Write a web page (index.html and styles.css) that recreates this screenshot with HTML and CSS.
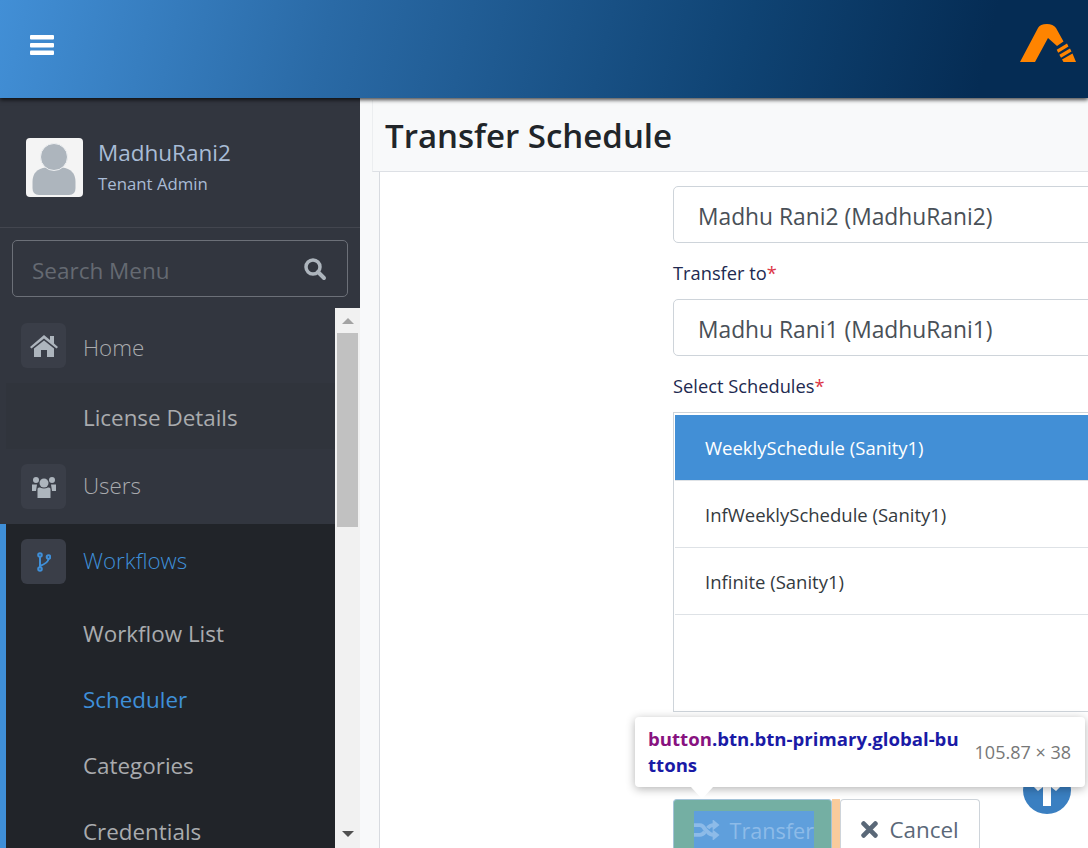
FILE: index.html
```html
<!DOCTYPE html>
<html lang="en">

<head>
    <meta charset="UTF-8">
    <title>Transfer Schedule</title>
    <link rel="stylesheet" href="styles.css">
</head>

<body>
    <header class="topbar">
        <svg class="burger" viewBox="0 0 24 20" width="24" height="20"><rect x="0" y="0" width="24" height="4.500" rx="1"/><rect x="0" y="8" width="24" height="4.500" rx="1"/><rect x="0" y="15.500" width="24" height="4.500" rx="1"/></svg>
        <svg class="logo" viewBox="0 0 56 38" width="56" height="38">
            <path fill="#ff8400" d="M0 38 L18 4 Q20 0 27 0 Q33 0 36 4 L43.500 17.500 L37 22 L28 14 L15 38 Z"/>
            <path fill="#ff8400" d="M36.700 25.700 L47 19.500 L48.500 22.500 L38.200 28.700 Z M39.300 30.700 L50 24.500 L51.500 27.500 L41 33.700 Z M42 35.500 L52.500 29.500 L56 38 L43.500 38 Z"/>
        </svg>
    </header>

    <div class="layout">
        <aside class="sidebar">
            <div class="profile">
                <svg class="avatar" viewBox="0 0 57 59" width="57" height="59">
                    <rect width="57" height="59" rx="4" fill="#f4f4f4"/>
                    <path fill="#adb5bd" d="M6.500 50 V44 Q6.500 31 20 29.500 H36 Q49.500 31 49.500 44 V50 Q49.500 57 43 57 H13 Q6.500 57 6.500 50 Z"/>
                    <circle cx="28" cy="19" r="13.500" fill="#adb5bd" stroke="#eef0f2" stroke-width="1"/>
                </svg>
                <div class="profile-text">
                    <div class="profile-name">MadhuRani2</div>
                    <div class="profile-role">Tenant Admin</div>
                </div>
            </div>
            <div class="search">
                <span class="search-label">Search Menu</span>
                <svg viewBox="0 0 24 24" width="24" height="24"><circle cx="10" cy="10" r="7" fill="none" stroke="#adb5bd" stroke-width="3.500"/><path d="M15 15 L21 21" stroke="#adb5bd" stroke-width="4" stroke-linecap="round"/></svg>
            </div>
            <div class="menu-wrap">
                <nav class="menu">
                    <a class="item">
                        <span class="item-icon">
                            <svg viewBox="0 0 28 22" width="28" height="22"><path fill="#adb5bd" d="M14 0 L20 5 V1 H24 V8.500 L28 12 L26.500 13.500 L14 3.500 L1.500 13.500 L0 12 Z M14 5.500 L24 13.500 V22 H17 V15 H11 V22 H4 V13.500 Z"/></svg>
                        </span>
                        <span class="label-low">Home</span>
                    </a>
                    <a class="sub sub-home">License Details</a>
                    <a class="item">
                        <span class="item-icon">
                            <svg viewBox="0 0 24 22" width="24" height="22"><g fill="#adb5bd"><circle cx="4" cy="4" r="3"/><circle cx="20" cy="4" r="3"/><circle cx="12" cy="7" r="4.500"/><path d="M0 8.500 H5 L4 15 H0 Z M24 8.500 H19 L20 15 H24 Z M5.500 13 Q5.500 11 8 11.500 Q12 13.500 16 11.500 Q18.500 11 18.500 13 V22 H5.500 Z"/></g></svg>
                        </span>
                        <span class="label-high">Users</span>
                    </a>
                    <div class="group">
                        <a class="item item-active">
                            <span class="item-icon">
                                <svg viewBox="0 0 14 20" width="14" height="20" fill="none" stroke="#3f8fd8" stroke-width="2"><circle cx="3" cy="3" r="1.800"/><circle cx="3" cy="17" r="1.800"/><circle cx="11.500" cy="5" r="1.800"/><path d="M3 5 V15 M3 14 Q11 11 11.500 7"/></svg>
                            </span>
                            <span class="label-high">Workflows</span>
                        </a>
                        <a class="sub">Workflow List</a>
                        <a class="sub sub-active">Scheduler</a>
                        <a class="sub">Categories</a>
                        <a class="sub">Credentials</a>
                    </div>
                </nav>
                <div class="scrollbar">
                    <span class="arrow-up"></span>
                    <span class="thumb"></span>
                    <span class="arrow-down"></span>
                </div>
            </div>
        </aside>

        <main class="main">
            <h1 class="page-title">Transfer Schedule</h1>
            <div class="card">
                <div class="form">
                    <div class="field-box">Madhu Rani2 (MadhuRani2)</div>
                    <label class="field-label">Transfer to<span class="req">*</span></label>
                    <div class="field-box">Madhu Rani1 (MadhuRani1)</div>
                    <label class="field-label">Select Schedules<span class="req">*</span></label>
                    <ul class="schedules">
                        <li class="selected">WeeklySchedule (Sanity1)</li>
                        <li>InfWeeklySchedule (Sanity1)</li>
                        <li>Infinite (Sanity1)</li>
                    </ul>
                    <div class="actions">
                        <button class="btn btn-transfer">
                            <span class="btn-content">
                                <svg viewBox="0 0 26 20" width="26" height="20"><path fill="none" stroke="#8dbbe8" stroke-width="4" d="M0 5 H6 Q9 5 11 9 L14 12 Q16 15 20 15 H22 M0 15 H6 Q9 15 11 12 M14 8 Q16 5 20 5 H22"/><path fill="#8dbbe8" d="M19 -1 L26 5 L19 10.500 Z M19 9.500 L26 15 L19 21 Z"/></svg>
                                <span>Transfer</span>
                            </span>
                        </button>
                        <span class="btn-gap"></span>
                        <button class="btn btn-cancel">
                            <svg viewBox="0 0 16 16" width="17" height="17"><path stroke="#5a6878" stroke-width="4.500" stroke-linecap="round" d="M2.500 2.500 L13.500 13.500 M13.500 2.500 L2.500 13.500"/></svg>
                            <span>Cancel</span>
                        </button>
                    </div>
                </div>
            </div>
        </main>
    </div>

    <!-- floats above the form, devtools inspect overlay -->
    <div class="to-top">
        <svg viewBox="0 0 48 48" width="48" height="48"><circle cx="24" cy="24" r="24" fill="#3a7fc1"/><path fill="#fff" d="M24 8 L38 20 L33 25 L28 21 V40 H20 V21 L15 25 L10 20 Z"/></svg>
    </div>
    <div class="inspect">
        <div class="inspect-name"><span class="tag">button</span>.btn.btn-primary.global-bu<br>ttons</div>
        <div class="inspect-size">105.87 × 38</div>
        <span class="inspect-tip"></span>
    </div>
</body>

</html>
```

FILE: styles.css
```css
* {
    box-sizing: border-box;
}

html,
body {
    height: 100%;
}

body {
    margin: 0;
    overflow: hidden;
    font-family: "Open Sans", "Noto Sans", Arial, sans-serif;
    color: #343a40;
    background-color: #f8f9fa;
}

.topbar {
    position: relative;
    z-index: 2;
    height: 98px;
    display: flex;
    align-items: center;
    justify-content: space-between;
    padding: 0 12px 8px 30px;
    background: linear-gradient(103deg, #428fd6 0%, #2a6aa6 30%, #0f4373 68%, #052c54 90%, #052c54 100%);
    box-shadow: 0 2px 4px rgba(0, 0, 0, 0.7);
}

.burger {
    fill: #fff;
}

.logo {
    margin-bottom: 4px;
}

.layout {
    display: flex;
    height: 750px;
    overflow: hidden;
}

/* sidebar */
.sidebar {
    width: 360px;
    flex-shrink: 0;
    display: flex;
    flex-direction: column;
    background-color: #32363f;
}

.profile {
    height: 130px;
    display: flex;
    gap: 15px;
    padding: 40px 26px 0;
    border-bottom: 1px solid #43464f;
}

.avatar {
    flex-shrink: 0;
}

.profile-name {
    font-size: 22.500px;
    line-height: 30px;
    color: #a9bcd6;
}

.profile-role {
    font-size: 16.800px;
    line-height: 32px;
    color: #a9bcd6;
}

.search {
    margin: 12px 12px 11px;
    height: 57px;
    display: flex;
    align-items: center;
    justify-content: space-between;
    padding: 0 20px 0 19px;
    border: 1px solid #6c7078;
    border-radius: 5px;
}

.search-label {
    padding-top: 3px;
    font-size: 22.500px;
    color: #656a72;
}

.menu-wrap {
    flex: 1;
    min-height: 0;
    display: flex;
}

.menu {
    flex: 1;
    min-height: 0;
    overflow: hidden;
}

.item {
    height: 75px;
    display: flex;
    align-items: center;
    gap: 17px;
    padding-left: 21px;
    font-size: 22.400px;
    font-weight: 300;
    color: #a9abae;
}

.label-low {
    padding-top: 3px;
}

.label-high {
    padding-bottom: 2px;
}

.item-icon {
    width: 45px;
    height: 45px;
    display: flex;
    align-items: center;
    justify-content: center;
    border-radius: 6px;
    background-color: #3a3e48;
}

.sub {
    height: 66px;
    display: flex;
    align-items: center;
    padding-top: 3px;
    padding-left: 83px;
    font-size: 22.400px;
    color: #a9abae;
}

.sub-home {
    margin-left: 6px;
    padding-left: 77px;
    background-color: #30343c;
}

.group {
    border-left: 6px solid #3f8fd8;
    background-color: #212429;
}

.group .item {
    padding-left: 15px;
}

.group .sub {
    padding-left: 77px;
}

.item-active,
.group .sub-active {
    color: #3f8fd8;
}

.scrollbar {
    width: 25px;
    flex-shrink: 0;
    display: flex;
    flex-direction: column;
    align-items: center;
    background-color: #f1f1f1;
}

.arrow-up {
    margin-top: 10px;
    border: 6px solid transparent;
    border-top: 0;
    border-bottom: 6px solid #a3a3a3;
}

.thumb {
    width: 21px;
    height: 194px;
    margin-top: 9px;
    background-color: #c1c1c1;
}

.arrow-down {
    margin-top: auto;
    margin-bottom: 11px;
    border: 6px solid transparent;
    border-bottom: 0;
    border-top: 6px solid #505050;
}

/* main content */
.main {
    flex: 1;
    min-width: 0;
    display: flex;
    flex-direction: column;
    padding-top: 2px;
    padding-left: 12px;
    background-color: #f8f9fa;
}

.page-title {
    margin: 0;
    height: 72px;
    flex-shrink: 0;
    padding-left: 12px;
    display: flex;
    align-items: center;
    font-size: 33px;
    font-weight: 600;
    color: #212529;
    border-bottom: 1px solid #dde0e5;
    border-left: 1px solid #eceef0;
}

.card {
    flex: 1;
    min-height: 0;
    margin-left: 7px;
    padding-left: 293px;
    background-color: #fff;
    border-left: 1px solid #d8dbe0;
}

.form {
    padding-top: 14px;
    width: 430px;
}

.field-box {
    height: 57px;
    padding-left: 24px;
    padding-top: 4px;
    display: flex;
    align-items: center;
    font-size: 22.800px;
    color: #495057;
    background-color: #fff;
    border: 1px solid #ced4da;
    border-radius: 5px;
}

.field-label {
    display: block;
    height: 56px;
    padding-top: 16px;
    font-size: 18.300px;
    line-height: 27px;
    color: #212950;
}

.req {
    color: #dc3545;
}

.schedules {
    list-style: none;
    margin: 0;
    padding: 2px 0 0 1px;
    height: 300px;
    border: 1px solid #ced4da;
    background-color: #fff;
}

.schedules li {
    height: 67px;
    padding-left: 30px;
    display: flex;
    align-items: center;
    font-size: 18.500px;
    color: #343a40;
    border-bottom: 1px solid #dee2e6;
}

.schedules li.selected {
    height: 66px;
    color: #fff;
    background-color: #428fd6;
}

.actions {
    display: flex;
    margin-top: 87px;
}

.btn {
    height: 49px;
    display: flex;
    align-items: center;
    font-family: inherit;
    font-size: 22.400px;
    border-radius: 4px 4px 0 0;
}

.btn-transfer {
    width: 159px;
    padding: 11px 0 0 20px;
    align-items: flex-start;
    font-size: 21.600px;
    color: #8dbbe8;
    background-color: #74afa3;
    border: 1px solid #a3c3d8;
    border-bottom: 0;
}

.btn-content {
    width: 120px;
    height: 38px;
    display: flex;
    align-items: center;
    gap: 10px;
    background-color: #5f9fdc;
}

.btn-gap {
    width: 8px;
    background-color: #f9cb9c;
}

.btn-cancel {
    gap: 11px;
    width: 140px;
    padding-top: 11px;
    justify-content: center;
    color: #5a6878;
    background-color: #fff;
    border: 1px solid #ced4da;
    border-bottom: 0;
}

/* overlays */
.to-top {
    position: absolute;
    left: 1023px;
    top: 766px;
    width: 48px;
    height: 48px;
}

.inspect {
    position: absolute;
    left: 635px;
    top: 717px;
    width: 450px;
    height: 70px;
    display: flex;
    align-items: center;
    justify-content: space-between;
    padding: 0 14px 0 13px;
    background-color: #fff;
    border-radius: 4px;
    box-shadow: 0 2px 10px rgba(0, 0, 0, 0.3);
}

.inspect-name {
    font-size: 18.600px;
    font-weight: 700;
    line-height: 26px;
    color: #1a1aa6;
}

.tag {
    color: #881280;
}

.inspect-size {
    font-size: 18px;
    color: #777;
}

.inspect-tip {
    position: absolute;
    left: 56px;
    bottom: -12px;
    border: 11px solid transparent;
    border-bottom: 0;
    border-top: 12px solid #fff;
}
```
